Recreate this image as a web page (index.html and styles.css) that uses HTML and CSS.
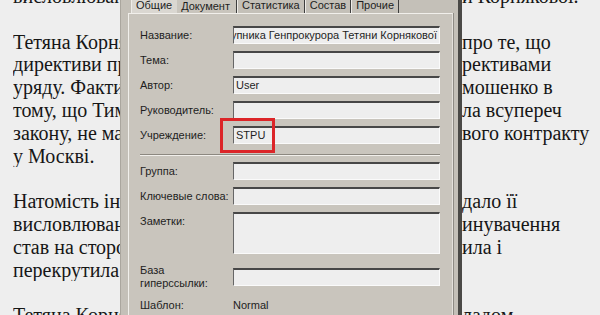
FILE: index.html
```html
<!DOCTYPE html>
<html lang="uk">
<head>
    <meta charset="utf-8">
    <title>Свойства документа</title>
    <link rel="stylesheet" href="styles.css">
</head>
<body>
    <div class="page">
        <p>
            <span class="line"><span class="l">висловлювання першого заступника Генпрокурора Тетян</span><span class="r">и Корнякової.</span></span>
        </p>
        <p>
            <span class="line"><span class="l">Тетяна Корнякова також заявила журналістам</span><span class="r">про те, що</span></span>
            <span class="line"><span class="l">директиви прем'єр-міністра не є обов'язковими ди</span><span class="r">рективами</span></span>
            <span class="line"><span class="l">уряду. Фактично вона звинуватила Юлію Ти</span><span class="r">мошенко в</span></span>
            <span class="line"><span class="l">тому, що Тимошенко нібито свідомо дія</span><span class="r">ла всупереч</span></span>
            <span class="line"><span class="l">закону, не маючи повноважень на підписання газо</span><span class="r">вого контракту</span></span>
            <span class="line"><span class="l">у Москві.</span><span class="r"></span></span>
        </p>
        <p>
            <span class="line"><span class="l">Натомість інформаційне агентство по</span><span class="r">дало її</span></span>
            <span class="line"><span class="l">висловлювання так, ніби прокуратура висунула обв</span><span class="r">инувачення</span></span>
            <span class="line"><span class="l">став на сторону тих, хто нібито повір</span><span class="r">ила і</span></span>
            <span class="line"><span class="l">перекрутила її слова.</span><span class="r"></span></span>
        </p>
        <p>
            <span class="line"><span class="l">Тетяна Корнякова вважає, що разом зі ск</span><span class="r">ладом</span></span>
        </p>
    </div>

    <div class="dialog">
        <div class="tabs">
            <span class="tab first">Общие</span>
            <span class="tab active">Документ</span>
            <span class="tab">Статистика</span>
            <span class="tab">Состав</span>
            <span class="tab">Прочие</span>
        </div>
        <div class="panel">
            <div class="form">
                <label>Название:</label>
                <div class="field end"><span>першого заступника Генпрокурора Тетяни Корнякової</span></div>
                <label>Тема:</label>
                <div class="field"></div>
                <label>Автор:</label>
                <div class="field">User</div>
                <label>Руководитель:</label>
                <div class="field"></div>
                <label>Учреждение:</label>
                <div class="field">STPU</div>

                <div class="sep"></div>

                <label>Группа:</label>
                <div class="field"></div>
                <label>Ключевые слова:</label>
                <div class="field"></div>
                <label class="top">Заметки:</label>
                <div class="field notes"></div>
                <label class="two">База гиперссылки:</label>
                <div class="field"></div>
                <label>Шаблон:</label>
                <div class="value">Normal</div>
            </div>
        </div>
    </div>

    <div class="mark"></div>
</body>
</html>
```

FILE: styles.css
```css
html, body {
    height: 315px;
}
body {
    margin: 0;
    background-color: #eeeeee;
    color: #161616;
    font-family: "Liberation Serif", serif;
    overflow: hidden;
}
.page {
    margin-top: -15px;
    padding-left: 13px;
    font-size: 20px;
    line-height: 22.8px;
}
.page p {
    margin: 0 0 22.8px;
}
.line {
    display: grid;
    grid-template-columns: 449px auto;
    white-space: nowrap;
}
.line .l {
    overflow: hidden;
}

/* document properties window */
.dialog {
    position: absolute;
    left: 120px;
    top: 0;
    width: 342px;
    height: 315px;
    box-sizing: border-box;
    display: flex;
    flex-direction: column;
    background-color: #c4c0b8;
    border-left: 1px solid #aaa69e;
    border-right: 4px solid #4a4946;
    padding: 0 5px 0 7px;
    font-family: "Liberation Sans", sans-serif;
    font-size: 11px;
    color: #1e1e1e;
}
.tabs {
    display: flex;
    height: 13px;
    padding-left: 3px;
}
.tab {
    padding: 0 4px;
    line-height: 11px;
    border-left: 1px solid #eeece8;
    border-right: 1px solid #3e3e3e;
}
.tab.first {
    background-color: #dad7d1;
    border-right: none;
    padding: 0 5px 0 4px;
}
.tab.active {
    background-color: #c9c5bd;
    border-left: none;
    padding: 0 6px 0 4px;
    line-height: 12px;
}
.panel {
    flex: 1;
    background-color: #c9c5bd;
    border-top: 1px solid #f1efeb;
    border-left: 1px solid #f1efeb;
    border-right: 1px solid #e4e1dc;
    box-shadow: 1px 0 0 #8e8b84;
    padding: 12px 11px 0 11px;
}
.form {
    display: grid;
    grid-template-columns: 93px 207px;
    row-gap: 7px;
    align-items: center;
}
.form label {
    line-height: 13px;
}
.form label.top {
    align-self: start;
    padding-top: 3px;
}
.field {
    height: 18px;
    box-sizing: border-box;
    background-color: #eeeeee;
    border-top: 2px solid #474747;
    border-left: 1px solid #666666;
    border-right: 1px solid #fafafa;
    border-bottom: 1px solid #fafafa;
    padding: 0 2px;
    line-height: 14px;
    white-space: nowrap;
    overflow: hidden;
}
.field.end {
    display: flex;
    justify-content: flex-end;
}
.field.end span {
    flex-shrink: 0;
}
.field.notes {
    height: 42px;
    margin-bottom: 3px;
}
.sep {
    grid-column: 1 / -1;
    border-top: 1px solid #8c8880;
    border-bottom: 1px solid #f1efeb;
    margin: 3px 0 -1px;
}
.value {
    line-height: 16px;
}

.mark {
    position: absolute;
    left: 220px;
    top: 118px;
    width: 55px;
    height: 35px;
    box-sizing: border-box;
    border: 3px solid #dc2528;
}
```
